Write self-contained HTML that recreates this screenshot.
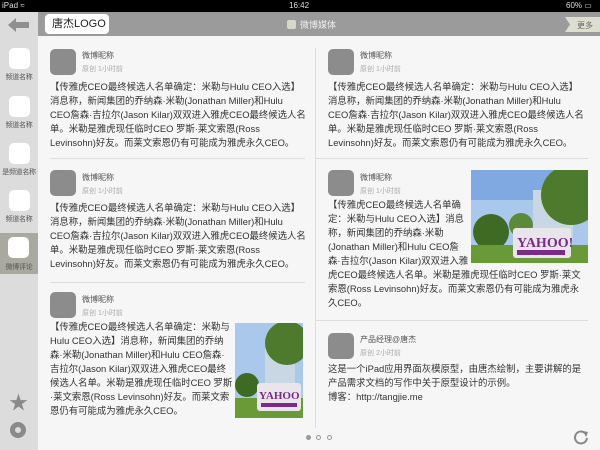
<!DOCTYPE html><html><head><meta charset="utf-8"><style>
*{margin:0;padding:0;box-sizing:border-box}
body{width:600px;height:450px;overflow:hidden;background:#f6f6f6;font-family:"Liberation Sans","Noto Sans CJK SC",sans-serif;position:relative;color:#333}
.a{position:absolute}
.sb{left:0;top:12px;width:38px;height:438px;background:#dcdcdc}
.sq{position:absolute;left:9px;width:21px;height:21px;background:#fff;border-radius:5px}
.lb{position:absolute;left:0;width:38px;text-align:center;font-size:7px;color:#555;white-space:nowrap;letter-spacing:-0.3px}
.av{position:absolute;width:26px;height:26px;background:#8c8c8c;border-radius:5px}
.nm{position:absolute;font-size:8px;color:#555}
.mt{position:absolute;font-size:7px;color:#aaa}
.tx{position:absolute;font-size:9.4px;line-height:14px;color:#333;white-space:nowrap}
.hl{position:absolute;height:1px;background:#dedede}
</style></head><body>
<div class="a" style="left:0;top:0;width:600px;height:12px;background:#000;color:#ddd;font-size:8px;line-height:12px">
<span class="a" style="left:2px">iPad ≈</span><span class="a" style="left:289px">16:42</span><span class="a" style="left:566px">60% ▭</span></div>
<div class="a sb"></div>
<svg class="a" style="left:8px;top:17px" width="22" height="16"><polygon points="0,8 8,1 8,5 21,5 21,11 8,11 8,15" fill="#8f8f8f"/></svg>
<div class="a" style="left:38px;top:12px;width:562px;height:24px;background:#9b9b9b"></div>
<div class="a" style="left:45px;top:14px;width:64px;height:20px;background:#fff;border-radius:4px;font-size:11px;line-height:20px;padding-left:7px;color:#222">唐杰LOGO</div>
<div class="a" style="left:287px;top:20px;width:9px;height:9px;background:#d8d8c8;border-radius:2px"></div>
<div class="a" style="left:300px;top:18px;font-size:9px;color:#eee">微博媒体</div>
<svg class="a" style="left:565px;top:17px" width="35" height="15"><polygon points="0,0 35,0 35,15 0,15 5,7.5" fill="#deded0"/><text x="12" y="11" font-size="8" fill="#666" font-family="Noto Sans CJK SC">更多</text></svg>

<div class="sq" style="top:48px"></div><div class="lb" style="top:72px">频道名称</div>
<div class="sq" style="top:96px"></div><div class="lb" style="top:120px">频道名称</div>
<div class="sq" style="top:143px"></div><div class="lb" style="top:167px">是频道名称</div>
<div class="sq" style="top:190px"></div><div class="lb" style="top:214px">频道名称</div>
<div class="a" style="left:0;top:233px;width:38px;height:41px;background:#a9a9a0"></div>
<div class="sq" style="top:237px;left:8px"></div><div class="lb" style="top:262px">微博评论</div>
<div class="a" style="left:9px;top:388px;font-size:19px;color:#8a8a8a">★</div>
<div class="a" style="left:10px;top:422px;width:16px;height:16px;border-radius:50%;border:5px solid #8a8a8a"></div>

<div class="a" style="left:315px;top:48px;width:1px;height:380px;background:#ddd"></div>
<div class="hl" style="left:50px;top:158px;width:255px"></div>
<div class="hl" style="left:50px;top:282px;width:255px"></div>
<div class="hl" style="left:316px;top:158px;width:272px"></div>
<div class="hl" style="left:316px;top:320px;width:272px"></div>

<div class="av" style="left:50px;top:49px"></div><div class="nm" style="left:82px;top:50px">微博昵称</div><div class="mt" style="left:82px;top:64px">原创 1小时前</div>
<div class="tx" style="left:50px;top:80px">【传雅虎CEO最终候选人名单确定：米勒与Hulu CEO入选】<br>消息称，新闻集团的乔纳森·米勒(Jonathan Miller)和Hulu<br>CEO詹森·吉拉尔(Jason Kilar)双双进入雅虎CEO最终候选人名<br>单。米勒是雅虎现任临时CEO 罗斯·莱文索恩(Ross<br>Levinsohn)好友。而莱文索恩仍有可能成为雅虎永久CEO。</div>
<div class="av" style="left:328px;top:49px"></div><div class="nm" style="left:360px;top:50px">微博昵称</div><div class="mt" style="left:360px;top:64px">原创 1小时前</div>
<div class="tx" style="left:328px;top:80px">【传雅虎CEO最终候选人名单确定：米勒与Hulu CEO入选】<br>消息称，新闻集团的乔纳森·米勒(Jonathan Miller)和Hulu<br>CEO詹森·吉拉尔(Jason Kilar)双双进入雅虎CEO最终候选人名<br>单。米勒是雅虎现任临时CEO 罗斯·莱文索恩(Ross<br>Levinsohn)好友。而莱文索恩仍有可能成为雅虎永久CEO。</div>
<div class="av" style="left:50px;top:170px"></div><div class="nm" style="left:82px;top:172px">微博昵称</div><div class="mt" style="left:82px;top:186px">原创 1小时前</div>
<div class="tx" style="left:50px;top:201px">【传雅虎CEO最终候选人名单确定：米勒与Hulu CEO入选】<br>消息称，新闻集团的乔纳森·米勒(Jonathan Miller)和Hulu<br>CEO詹森·吉拉尔(Jason Kilar)双双进入雅虎CEO最终候选人名<br>单。米勒是雅虎现任临时CEO 罗斯·莱文索恩(Ross<br>Levinsohn)好友。而莱文索恩仍有可能成为雅虎永久CEO。</div>
<div class="av" style="left:328px;top:170px"></div><div class="nm" style="left:360px;top:172px">微博昵称</div><div class="mt" style="left:360px;top:186px">原创 1小时前</div>
<div class="tx" style="left:328px;top:198px">【传雅虎CEO最终候选人名单确<br>定：米勒与Hulu CEO入选】消息<br>称，新闻集团的乔纳森·米勒<br>(Jonathan Miller)和Hulu CEO詹<br>森·吉拉尔(Jason Kilar)双双进入雅<br>虎CEO最终候选人名单。米勒是雅虎现任临时CEO 罗斯·莱文<br>索恩(Ross Levinsohn)好友。而莱文索恩仍有可能成为雅虎永<br>久CEO。</div>
<svg class="a" style="left:471px;top:170px" width="117" height="93"><rect width="117" height="93" fill="#a9c8ec"/><rect y="0" width="117" height="30" fill="#7fa9e0"/><rect x="62" y="20" width="40" height="50" fill="#c9d6e4"/><circle cx="100" cy="25" r="30" fill="#4d7a2c"/><circle cx="20" cy="62" r="18" fill="#3e6a24"/><circle cx="50" cy="55" r="12" fill="#5b8a3a"/><rect y="75" width="117" height="18" fill="#6a9a38"/><rect x="42" y="58" width="58" height="30" rx="3" fill="#e8e6ea"/><text x="46" y="77" font-size="14" font-weight="bold" fill="#7b2a8a" font-family="Liberation Serif">YAHOO!</text><rect x="46" y="80" width="48" height="5" fill="#7b2a8a"/></svg>
<div class="av" style="left:50px;top:292px"></div><div class="nm" style="left:82px;top:294px">微博昵称</div><div class="mt" style="left:82px;top:308px">原创 1小时前</div>
<div class="tx" style="left:50px;top:320px">【传雅虎CEO最终候选人名单确定：米勒与<br>Hulu CEO入选】消息称，新闻集团的乔纳<br>森·米勒(Jonathan Miller)和Hulu CEO詹森·<br>吉拉尔(Jason Kilar)双双进入雅虎CEO最终<br>候选人名单。米勒是雅虎现任临时CEO 罗斯<br>·莱文索恩(Ross Levinsohn)好友。而莱文索<br>恩仍有可能成为雅虎永久CEO。</div>
<svg class="a" style="left:235px;top:323px" width="68" height="95"><rect width="68" height="95" fill="#a9c8ec"/><rect x="30" y="25" width="30" height="45" fill="#c9d6e4"/><circle cx="52" cy="20" r="22" fill="#4d7a2c"/><circle cx="12" cy="62" r="12" fill="#3e6a24"/><rect y="75" width="68" height="20" fill="#6a9a38"/><rect x="22" y="60" width="44" height="28" rx="3" fill="#e8e6ea"/><text x="24" y="76" font-size="11" font-weight="bold" fill="#7b2a8a" font-family="Liberation Serif">YAHOO</text><rect x="26" y="80" width="36" height="4" fill="#7b2a8a"/></svg>
<div class="av" style="left:328px;top:333px"></div><div class="nm" style="left:360px;top:334px">产品经理@唐杰</div><div class="mt" style="left:360px;top:348px">原创 2小时前</div>
<div class="tx" style="left:328px;top:362px">这是一个iPad应用界面灰模原型，由唐杰绘制，主要讲解的是<br>产品需求文档的写作中关于原型设计的示例。<br>博客：http://tangjie.me</div>

<div class="a" style="left:306px;top:435px;width:5px;height:5px;border-radius:50%;background:#999"></div>
<div class="a" style="left:316px;top:435px;width:5px;height:5px;border-radius:50%;border:1px solid #999"></div>
<div class="a" style="left:327px;top:435px;width:5px;height:5px;border-radius:50%;border:1px solid #999"></div>
<svg class="a" style="left:573px;top:429px" width="16" height="16"><path d="M12 4 A6 6 0 1 0 14 9" fill="none" stroke="#888" stroke-width="2"/><polygon points="10,2 15,3 13,8" fill="#888"/></svg>
</body></html>
